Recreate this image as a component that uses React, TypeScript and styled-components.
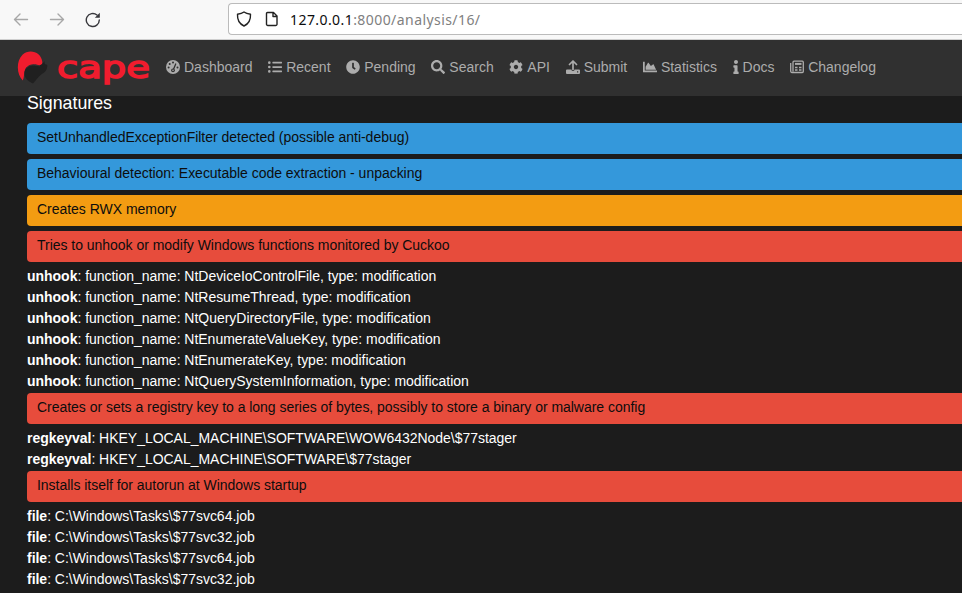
import React from 'react';
import styled, { createGlobalStyle } from 'styled-components';
import { FaListUl, FaClock, FaSearch, FaCog, FaChartArea, FaInfo } from 'react-icons/fa';

const GlobalStyle = createGlobalStyle`
  * { box-sizing: border-box; }
  body { margin: 0; background: #1c1c1c; overflow: hidden; font-family: "Liberation Sans", Arial, sans-serif; }
`;

const Page = styled.div`
  width: 100%;
  height: 593px;
  overflow: hidden;
  display: flex;
  flex-direction: column;
  background: #1c1c1c;
`;

const BrowserBar = styled.div`
  flex: none;
  height: 40px;
  display: flex;
  background: #f8f8f8;
  border-bottom: 1px solid #cfcfcf;
`;

const BrowserButtons = styled.div`
  width: 228px;
  flex: none;
  padding: 12px 0 0 13px;
  display: flex;
  gap: 20px;
`;

const ToolIcon = styled.svg<{ $color: string }>`
  width: 16px;
  height: 16px;
  flex: none;
  fill: none;
  stroke: ${p => p.$color};
  stroke-width: 1.4;
  stroke-linecap: round;
  stroke-linejoin: round;
`;

const UrlField = styled.div`
  flex: 1;
  height: 32px;
  margin-top: 3px;
  border: 1px solid #bbb;
  border-right: 0;
  border-radius: 4px 0 0 4px;
  background: #fff;
  display: flex;
  align-items: center;
  padding-left: 7px;
  gap: 12px;
`;

const Url = styled.span`
  font: 14px/20px "Noto Sans", sans-serif;
  color: #808080;
  letter-spacing: 0.43px;
  margin: 2px 0 0 -2px;
`;

const Host = styled.span`
  color: #0c0c0d;
`;

const NavBar = styled.nav`
  flex: none;
  height: 56px;
  background: #303030;
  display: flex;
  align-items: center;
`;

const Brand = styled.svg`
  width: 166px;
  height: 56px;
  flex: none;
`;

const BrandText = styled.text`
  font: 31px "DejaVu Sans", sans-serif;
  fill: #f11c2e;
  stroke: #f11c2e;
  stroke-width: 1.5;
`;

const NavItems = styled.div`
  display: flex;
  gap: 15.7px;
  margin-bottom: 2px;
`;

const NavItem = styled.a`
  display: flex;
  align-items: center;
  gap: 4px;
  font-size: 14px;
  line-height: 21px;
  color: #acacac;
  white-space: nowrap;
`;

const IconSlot = styled.span<{ $narrow?: boolean }>`
  width: ${p => (p.$narrow ? 6 : 14)}px;
  height: 14px;
  flex: none;
  display: flex;
  justify-content: center;
  svg { flex: none; width: 14px; height: 14px; }
`;

const Content = styled.main`
  padding-left: 27px;
`;

const Heading = styled.h2`
  margin: 0 0 9px;
  height: 18px;
  font-size: 17.8px;
  font-weight: 400;
  line-height: 14px;
  color: #fff;
`;

const tones = { info: '#3498db', warning: '#f39c12', danger: '#e74c3c' };
type Tone = keyof typeof tones;

const Signature = styled.div<{ $tone: Tone }>`
  height: 31px;
  margin-bottom: 5px;
  padding: 4px 10px;
  border-radius: 4px 0 0 4px;
  background: ${p => tones[p.$tone]};
  color: #0d0d0d;
  font-size: 14px;
  line-height: 21px;
  letter-spacing: -0.026px;
  white-space: nowrap;
`;

const Detail = styled.div`
  height: 21px;
  font-size: 14px;
  line-height: 19px;
  letter-spacing: -0.026px;
  color: #fff;
  white-space: nowrap;
`;

const GaugeIcon = () => (
  <svg viewBox="0 0 14 14">
    <circle cx="7" cy="7" r="7" fill="currentColor" />
    <g fill="#303030">
      <circle cx="2.600" cy="7.400" r="1" />
      <circle cx="3.700" cy="4.100" r="1" />
      <circle cx="7" cy="2.600" r="1" />
      <circle cx="11.500" cy="7.400" r="1" />
      <circle cx="7" cy="10.300" r="1.900" />
    </g>
    <path d="M7.200 10 9.700 4" stroke="#303030" strokeWidth="1.300" strokeLinecap="round" />
    <circle cx="7" cy="10.300" r=".8" fill="currentColor" />
  </svg>
);

const SubmitIcon = () => (
  <svg viewBox="0 0 14 14" fill="none">
    <path d="M7 9.500V1.500M3.500 4.500 7 1l3.500 3.500" stroke="currentColor" strokeWidth="1.700" strokeLinejoin="round" strokeLinecap="round" />
    <path fillRule="evenodd" d="M1 9.500h4.500c0 2 3 2 3 0H13a1 1 0 0 1 1 1V13a1 1 0 0 1-1 1H1a1 1 0 0 1-1-1v-2.500a1 1 0 0 1 1-1zM11 11.300v1.200h1.200v-1.200z" fill="currentColor" />
  </svg>
);

const NewsIcon = () => (
  <svg viewBox="0 0 14 14" fill="none" stroke="currentColor">
    <path d="M3 11.500V2.200a1 1 0 0 1 1-1h8.300a1 1 0 0 1 1 1v9.300a1 1 0 0 1-1 1H1.800A1.200 1.200 0 0 1 .7 11.300V3" strokeWidth="1.300" />
    <path d="M5 3.900h6.500" strokeWidth="2" />
    <path d="M5 7.500h2.500M9 7.500h2.500M5 10h2.500M9 10h2.500" strokeWidth="1.500" />
  </svg>
);

const nav = [
  { label: 'Dashboard', Icon: GaugeIcon },
  { label: 'Recent', Icon: FaListUl },
  { label: 'Pending', Icon: FaClock },
  { label: 'Search', Icon: FaSearch },
  { label: 'API', Icon: FaCog },
  { label: 'Submit', Icon: SubmitIcon },
  { label: 'Statistics', Icon: FaChartArea },
  { label: 'Docs', Icon: FaInfo, narrow: true },
  { label: 'Changelog', Icon: NewsIcon },
];

const hooks = ['NtDeviceIoControlFile', 'NtResumeThread', 'NtQueryDirectoryFile', 'NtEnumerateValueKey', 'NtEnumerateKey', 'NtQuerySystemInformation'];

const signatures: { tone: Tone; title: string; field?: string; values?: string[] }[] = [
  { tone: 'info', title: 'SetUnhandledExceptionFilter detected (possible anti-debug)' },
  { tone: 'info', title: 'Behavioural detection: Executable code extraction - unpacking' },
  { tone: 'warning', title: 'Creates RWX memory' },
  {
    tone: 'danger',
    title: 'Tries to unhook or modify Windows functions monitored by Cuckoo',
    field: 'unhook',
    values: hooks.map(h => `function_name: ${h}, type: modification`),
  },
  {
    tone: 'danger',
    title: 'Creates or sets a registry key to a long series of bytes, possibly to store a binary or malware config',
    field: 'regkeyval',
    values: ['HKEY_LOCAL_MACHINE\\SOFTWARE\\WOW6432Node\\$77stager', 'HKEY_LOCAL_MACHINE\\SOFTWARE\\$77stager'],
  },
  {
    tone: 'danger',
    title: 'Installs itself for autorun at Windows startup',
    field: 'file',
    values: ['64', '32', '64', '32'].map(n => `C:\\Windows\\Tasks\\$77svc${n}.job`),
  },
];

export default function App() {
  return (
    <Page>
      <GlobalStyle />
      <BrowserBar>
        <BrowserButtons>
          <ToolIcon $color="#a8a8a8" viewBox="0 0 16 16"><path d="M14.500 7.500H1.500M7 2 1.500 7.500 7 13" /></ToolIcon>
          <ToolIcon $color="#a8a8a8" viewBox="0 0 16 16"><path d="M1.500 7.500h13M9 2l5.500 5.500L9 13" /></ToolIcon>
          <ToolIcon $color="#38383d" viewBox="0 0 16 16">
            <path d="M14.300 8A6.500 6.500 0 1 1 12 3" />
            <path d="M14.800 .8v5H9.800z" fill="#38383d" stroke="none" />
          </ToolIcon>
        </BrowserButtons>
        <UrlField>
          <ToolIcon $color="#222" viewBox="0 0 16 16"><path d="M8 1c2 1.500 4.300 2 6.500 2.300C14.800 8.500 12.500 13 8 15 3.500 13 1.200 8.500 1.500 3.300 3.700 3 6 2.500 8 1z" /></ToolIcon>
          <ToolIcon $color="#222" viewBox="0 0 16 16"><path d="M3.500 1.500h6l3.500 3.500v8.200a1.300 1.300 0 0 1-1.300 1.300H3.800a1.300 1.300 0 0 1-1.300-1.300V2.500a1 1 0 0 1 1-1zM9 1.500v4h4" /></ToolIcon>
          <Url><Host>127.0.0.1</Host>:8000/analysis/16/</Url>
        </UrlField>
      </BrowserBar>
      <NavBar>
        <Brand viewBox="0 0 166 56">
          <path d="M22.800 40.500C16.500 34 16 21 22.500 14.700 29.500 8 41.500 12 42.300 22c.1 2-.8 3.500-2 4.200-4-2.200-12-2.700-15 3.300-1.700 4-.8 7.500-2.500 11z" fill="#f11c2e" />
          <path d="M25 30c2-4 6-5.300 10-4.300 4 .8 8-1.200 9.300-4.700l.5 3 2.500 1c.3 4.500-2.500 7.500-5.300 9-3 2-4.500 4.500-9 9.500-4-1.500-8-5-8.500-9-.2-2-.1-3 .5-4.500z" fill="#202020" />
          <path d="M26 28.500c3-4.500 10-4.500 13.500-2.300" fill="none" stroke="#303030" strokeWidth="1" />
          <BrandText x="57" y="38" textLength="93" lengthAdjust="spacingAndGlyphs">cape</BrandText>
        </Brand>
        <NavItems>
          {nav.map(({ label, Icon, narrow }) => (
            <NavItem key={label}><IconSlot $narrow={narrow}><Icon /></IconSlot>{label}</NavItem>
          ))}
        </NavItems>
      </NavBar>
      <Content>
        <Heading>Signatures</Heading>
        {signatures.map(s => (
          <React.Fragment key={s.title}>
            <Signature $tone={s.tone}>{s.title}</Signature>
            {s.values?.map((v, i) => (
              <Detail key={i}><b>{s.field}</b>: {v}</Detail>
            ))}
          </React.Fragment>
        ))}
      </Content>
    </Page>
  );
}
